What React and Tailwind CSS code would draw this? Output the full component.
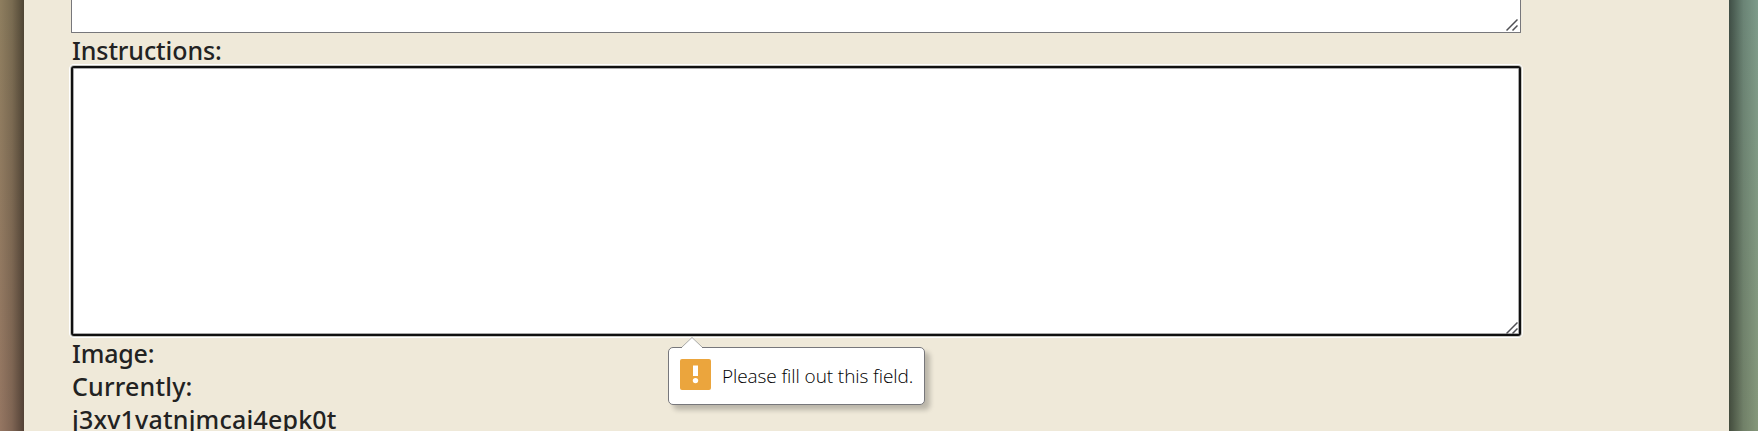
function ResizeGrip() {
  return (
    <svg className="block h-3 w-3" viewBox="0 0 12 12" fill="none" stroke="#505055" strokeWidth="1.5">
      <path d="M0.5 11.5L11.5 0.5M6.5 11.5L11.5 6.5" />
    </svg>
  );
}

function Label({ children, className }) {
  return <div className={`h-[33px] whitespace-nowrap leading-[33px] ${className}`}>{children}</div>;
}

function ValidationTooltip() {
  return (
    <div
      role="alert"
      className="absolute top-[347px] left-[668px] flex h-[58px] w-[257px] items-start rounded-[5px] border border-[#77777b] bg-white pt-[11px] pl-[11px] font-['Open_Sans',sans-serif] shadow-[5px_5px_5px_rgba(0,0,0,0.22)]"
    >
      <svg className="absolute -top-[11px] left-[13px] h-[11px] w-5" viewBox="0 0 20 11">
        <path d="M0 10L10 0L20 10V11H0Z" fill="white" />
        <path d="M0 10L10 0.5L20 10" fill="none" stroke="#a9a9a5" />
      </svg>
      <svg className="h-[31px] w-[31px] shrink-0" viewBox="0 0 31 31">
        <rect width="31" height="31" rx="2" fill="#eba53d" />
        <path d="M13 6.5H18V17H13Z" fill="white" />
        <circle cx="15.5" cy="21.6" r="2.7" fill="white" />
      </svg>
      <span className="ml-[11px] mt-[3px] whitespace-nowrap text-[19px] leading-[28px] font-[360] tracking-[-0.09px] text-black">
        Please fill out this field.
      </span>
    </div>
  );
}

export default function App() {
  return (
    <div className="relative flex h-[431px] w-full overflow-hidden bg-[#efe9d9]">
      <div className="w-6 shrink-0 bg-linear-to-b from-[#8e7e5f] to-[#957662]">
        <div className="h-full bg-linear-to-r from-transparent via-black/15 to-black/45" />
      </div>
      <main className="flex flex-1 flex-col items-start pl-[47px] font-['Noto_Sans',sans-serif] text-[25px] font-medium text-[#222222]">
        <div className="flex h-[33px] w-[1450px] shrink-0 items-end justify-end rounded-b-[1px] border border-t-0 border-[#77777b] bg-white pr-[2px] pb-[1px]">
          <ResizeGrip />
        </div>
        <div className="h-[33px] shrink-0 pt-px pl-px">
          <Label className="tracking-[-0.1px]">Instructions:</Label>
        </div>
        <div className="flex h-[270px] w-[1450px] shrink-0 items-end justify-end rounded-[3px] border-2 border-[#101010] bg-white pr-px shadow-[0_0_0_1px_#c5c5be,0_0_0_2px_#fff,inset_0_0_0_1px_#aaa]">
          <ResizeGrip />
        </div>
        <div className="shrink-0 pt-px pl-px">
          <Label className="tracking-[-0.2px]">Image:</Label>
          <Label className="tracking-[0.2px]">Currently:</Label>
          <Label className="tracking-[0.2px]">j3xv1vatnjmcai4epk0t</Label>
        </div>
      </main>
      <div className="w-[29px] shrink-0 bg-linear-to-b from-[#7d9b8a] to-[#85977a]">
        <div className="h-full bg-linear-to-l from-transparent via-black/15 to-black/50" />
      </div>
      <ValidationTooltip />
    </div>
  );
}
